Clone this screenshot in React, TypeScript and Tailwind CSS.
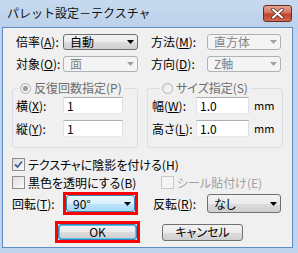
import React from "react";

const Arrow = ({ color }: { color: string }) => (
  <svg width="7" height="4" viewBox="0 0 7 4" className="shrink-0">
    <polygon points="0,0 7,0 3.5,4" fill={color} />
  </svg>
);

type V = "normal" | "disabled" | "hot";

function Combo({ text, size, v }: { text: string; size: string; v: V }) {
  const cls =
    v === "disabled"
      ? "border-[#adb2b5] bg-[#f4f4f4] text-[#838383]"
      : v === "hot"
      ? "border-[#3c7fb1] bg-[linear-gradient(#eaf6fd,#d9f0fc_50%,#bee6fd_50%,#a7d9f5)] text-black"
      : "border-[#707070] bg-[linear-gradient(#f2f2f2,#ebebeb_50%,#dddddd_50%,#cfcfcf)] text-black";
  return (
    <div className={`${size} ${cls} border rounded-[3px] flex items-center justify-between pl-[6px] pr-[3px] text-[12px] leading-none`}>
      <span>{text}</span>
      <Arrow color={v === "disabled" ? "#a0a0a0" : "#000"} />
    </div>
  );
}

function Input({ text, size }: { text: string; size: string }) {
  return (
    <div className={`${size} bg-white border border-[#abadb3] border-l-[#e2e3ea] border-r-[#dbdfe6] border-b-[#e3e9ef] flex items-center pl-[3px] text-[12px] leading-none`}>
      {text}
    </div>
  );
}

function Radio({ checked }: { checked: boolean }) {
  return (
    <span className="w-[11px] h-[11px] rounded-full border border-[#b1b1b1] bg-[linear-gradient(135deg,#e6e6e6,#f8f8f8)] flex items-center justify-center shrink-0">
      {checked && <span className="w-[5px] h-[5px] rounded-full bg-[#9a9a9a]" />}
    </span>
  );
}

function Check({ checked, disabled }: { checked?: boolean; disabled?: boolean }) {
  return (
    <span
      className={`w-[13px] h-[13px] border ${disabled ? "border-[#c9c9c9] bg-[#f4f4f4]" : "border-[#8f8f8f] bg-[linear-gradient(135deg,#dcdcdc,#fbfbfb)]"} flex items-center justify-center shrink-0`}
    >
      {checked && (
        <svg width="9" height="9" viewBox="0 0 9 9">
          <path d="M1 4.5 L3.5 7 L8 1.5" stroke="#4a5f97" strokeWidth="1.8" fill="none" />
        </svg>
      )}
    </span>
  );
}

const M = ({ c }: { c: string }) => <span className="underline underline-offset-[1px]">{c}</span>;

export default function App() {
  return (
    <div className="w-[298px] h-[253px] bg-[#bfd4ec] flex flex-col overflow-hidden font-['Noto_Sans_CJK_JP','Noto_Sans',sans-serif] [font-feature-settings:'palt'] text-black">
      {/* title bar */}
      <div className="h-[27px] shrink-0 flex items-start justify-between pl-[7px] pr-[6px] bg-[linear-gradient(#c6d9ee,#bcd2eb)]">
        <span className="text-[12px] leading-none mt-[7px] text-[#111] [font-feature-settings:normal]">パレット設定－テクスチャ</span>
        <div className="mt-[5px] w-[29px] h-[17px] rounded-[3px] border border-[#6d2a22] bg-[linear-gradient(#e8a493,#d47460_45%,#c2432c_55%,#d06a4f)] flex items-center justify-center">
          <svg width="13" height="11" viewBox="0 0 13 11">
            <path d="M2 1.5 L11 9.5 M11 1.5 L2 9.5" stroke="#5a2a22" strokeWidth="3.6" strokeLinecap="round" />
            <path d="M2 1.5 L11 9.5 M11 1.5 L2 9.5" stroke="#ffffff" strokeWidth="2" strokeLinecap="round" />
          </svg>
        </div>
      </div>

      {/* client */}
      <div className="flex-1 ml-[2px] mr-[5px] mb-[5px] border border-[#5f8cc2] bg-[#f0f0f0] flex flex-col text-[12px] leading-none">
        {/* row 1 */}
        <div className="flex items-center h-[16px] mt-[6px]">
          <div className="ml-[13px] w-[47px]">倍率(<M c="A" />):</div>
          <Combo text="自動" size="w-[75px] h-[16px]" v="normal" />
          <div className="ml-[13px] w-[56px]">方法(<M c="M" />):</div>
          <Combo text="直方体" size="w-[74px] h-[16px]" v="disabled" />
        </div>
        {/* row 2 */}
        <div className="flex items-center h-[16px] mt-[6px]">
          <div className="ml-[13px] w-[47px]">対象(<M c="O" />):</div>
          <Combo text="面" size="w-[75px] h-[16px]" v="disabled" />
          <div className="ml-[13px] w-[56px]">方向(<M c="D" />):</div>
          <Combo text="Z軸" size="w-[74px] h-[16px]" v="disabled" />
        </div>

        {/* groups */}
        <div className="flex mt-[9px] ml-[9px] gap-[9px]">
          <fieldset className="w-[126px] border border-[#d5dfe5] rounded-[3px] pb-[10px]">
            <legend className="ml-[5px] px-[2px] h-[14px]">
              <span className="flex items-center gap-[3px] h-[14px] text-[#6d6d6d]">
                <Radio checked />
                <span>反復回数指定(P)</span>
              </span>
            </legend>
            <div className="flex items-center h-[17px] mt-[2px]">
              <div className="ml-[3px] w-[47px]">横(<M c="X" />):</div>
              <Input text="1" size="w-[60px] h-[17px]" />
            </div>
            <div className="flex items-center h-[17px] mt-[6px]">
              <div className="ml-[3px] w-[47px]">縦(<M c="Y" />):</div>
              <Input text="1" size="w-[60px] h-[17px]" />
            </div>
          </fieldset>
          <fieldset className="w-[136px] border border-[#d5dfe5] rounded-[3px] pb-[10px]">
            <legend className="ml-[12px] px-[2px] h-[14px]">
              <span className="flex items-center gap-[3px] h-[14px] text-[#6d6d6d]">
                <Radio checked={false} />
                <span>サイズ指定(S)</span>
              </span>
            </legend>
            <div className="flex items-center h-[17px] mt-[2px]">
              <div className="ml-[4px] w-[44px]">幅(<M c="W" />):</div>
              <Input text="1.0" size="w-[53px] h-[17px]" />
              <span className="ml-[5px] text-[11px]">mm</span>
            </div>
            <div className="flex items-center h-[17px] mt-[6px]">
              <div className="ml-[4px] w-[44px]">高さ(<M c="L" />):</div>
              <Input text="1.0" size="w-[53px] h-[17px]" />
              <span className="ml-[5px] text-[11px]">mm</span>
            </div>
          </fieldset>
        </div>

        {/* checkboxes */}
        <div className="flex items-center h-[13px] mt-[10px] ml-[9px] gap-[3px]">
          <Check checked />
          <span>テクスチャに陰影を付ける(H)</span>
        </div>
        <div className="flex items-center h-[13px] mt-[5px] ml-[9px]">
          <div className="flex items-center gap-[3px] w-[149px]">
            <Check />
            <span>黒色を透明にする(B)</span>
          </div>
          <div className="flex items-center gap-[3px] text-[#a0a0a0]">
            <Check disabled />
            <span>シール貼付け(E)</span>
          </div>
        </div>

        {/* rotation row */}
        <div className="flex items-center h-[23px] mt-[3px]">
          <div className="ml-[9px] w-[51px]">回転(<M c="T" />):</div>
          <div className="w-[75px] h-[23px] border-[3px] border-[#ff0000] flex">
            <Combo text="90°" size="w-full h-full" v="hot" />
          </div>
          <div className="ml-[15px] w-[54px]">反転(<M c="R" />):</div>
          <Combo text="なし" size="w-[74px] h-[19px]" v="normal" />
        </div>

        {/* buttons */}
        <div className="flex items-center h-[22px] mt-[6px]">
          <div className="ml-[52px] w-[85px] h-[22px] border-[3px] border-[#ff0000] flex">
            <div className="w-full h-full rounded-[3px] border border-[#3c7fb1] p-[1px] bg-[#55c5ef]">
              <div className="w-full h-full rounded-[2px] bg-[linear-gradient(#f2f2f2,#ebebeb_50%,#dddddd_50%,#cfcfcf)] flex items-center justify-center text-[12px]">
                OK
              </div>
            </div>
          </div>
          <div className="ml-[22px] w-[81px] h-[17px] rounded-[3px] border border-[#707070] bg-[linear-gradient(#f2f2f2,#ebebeb_50%,#dddddd_50%,#cfcfcf)] flex items-center justify-center text-[12px]">
            キャンセル
          </div>
        </div>
      </div>
    </div>
  );
}
